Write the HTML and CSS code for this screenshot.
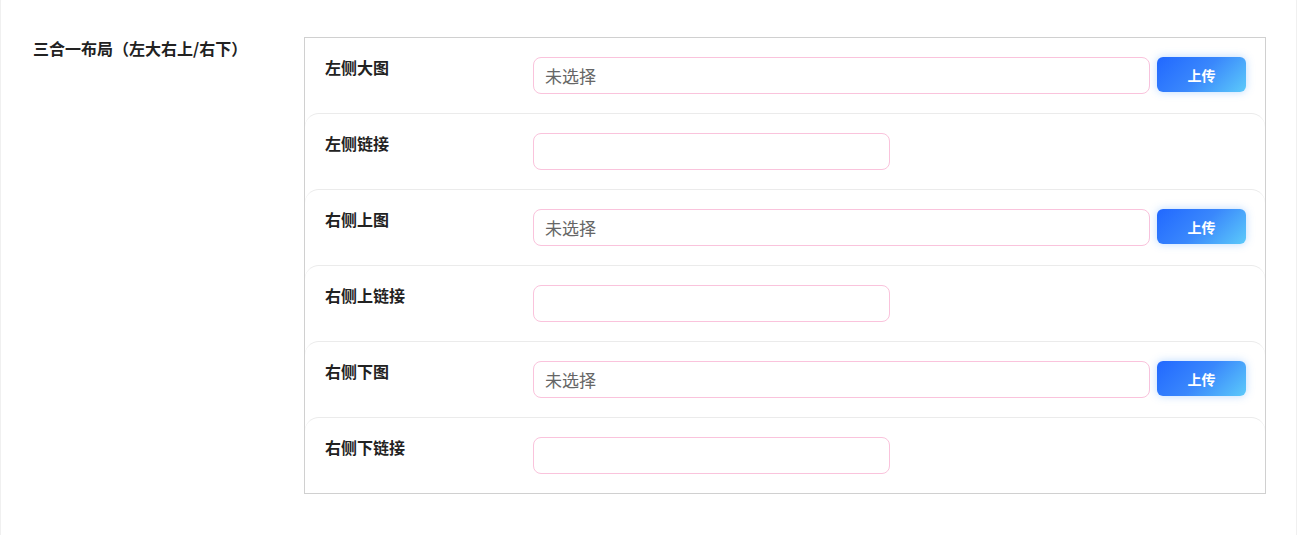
FILE: index.html
```html
<!DOCTYPE html>
<html lang="zh">
<head>
<meta charset="utf-8">
<link rel="stylesheet" href="styles.css">
</head>
<body>
<div class="card">
  <div class="section">
    <div class="section-title">三合一布局（左大右上/右下）</div>
    <div class="panel">
      <div class="row">
        <div class="label">左侧大图</div>
        <div class="field">
          <div class="input wide"><span class="placeholder">未选择</span></div>
          <button class="upload">上传</button>
        </div>
      </div>
      <div class="row">
        <div class="label">左侧链接</div>
        <div class="field"><div class="input short"></div></div>
      </div>
      <div class="row">
        <div class="label">右侧上图</div>
        <div class="field">
          <div class="input wide"><span class="placeholder">未选择</span></div>
          <button class="upload">上传</button>
        </div>
      </div>
      <div class="row">
        <div class="label">右侧上链接</div>
        <div class="field"><div class="input short"></div></div>
      </div>
      <div class="row">
        <div class="label">右侧下图</div>
        <div class="field">
          <div class="input wide"><span class="placeholder">未选择</span></div>
          <button class="upload">上传</button>
        </div>
      </div>
      <div class="row">
        <div class="label">右侧下链接</div>
        <div class="field"><div class="input short"></div></div>
      </div>
    </div>
  </div>
</div>
</body>
</html>
```
FILE: styles.css
```css
html, body {
  margin: 0;
  padding: 0;
  background: #fff;
}
body {
  font-family: "Noto Sans CJK SC", "Noto Sans", sans-serif;
  color: #222;
}
.card {
  width: 1297px;
  height: 545px;
  margin-top: -10px;
  box-sizing: border-box;
  border: 1px solid #f0f0f0;
  border-bottom: none;
  border-radius: 12px 12px 0 0;
}
.section {
  display: flex;
  padding-top: 46px;
}
.section-title {
  width: 271px;
  padding-left: 32px;
  font-size: 16px;
  font-weight: 700;
  line-height: 24px;
  margin-top: -1px;
  color: #222;
}
.panel {
  width: 962px;
  border: 1px solid #d0d0d0;
  box-sizing: border-box;
  display: flex;
  flex-direction: column;
}
.row {
  height: 76px;
  box-sizing: border-box;
  display: flex;
  align-items: flex-start;
  padding: 19px 0 0 20px;
  border-top: 1px solid #ebebeb;
  border-radius: 14px 14px 0 0;
}
.row:first-child {
  border-top: none;
  height: 75px;
}
.label {
  width: 208px;
  font-size: 16px;
  font-weight: 700;
  line-height: 20px;
  color: #222;
}
.field {
  display: flex;
  align-items: flex-start;
  gap: 7px;
}
.input {
  height: 37px;
  box-sizing: border-box;
  border: 1px solid #fac3dc;
  border-radius: 8px;
  display: flex;
  align-items: center;
  padding-left: 11px;
}
.input.wide { width: 617px; }
.input.short { width: 357px; }
.placeholder {
  font-size: 17px;
  color: #666;
}
.upload {
  width: 89px;
  height: 35px;
  border: none;
  border-radius: 6px;
  background: linear-gradient(135deg, #2168ff 0%, #3a88fc 50%, #5ccafa 100%);
  color: #fff;
  font-family: "Noto Sans CJK SC", sans-serif;
  font-size: 14px;
  font-weight: 700;
  box-shadow: 0 0 8px rgba(60, 150, 255, 0.35);
  padding: 0;
}
```
